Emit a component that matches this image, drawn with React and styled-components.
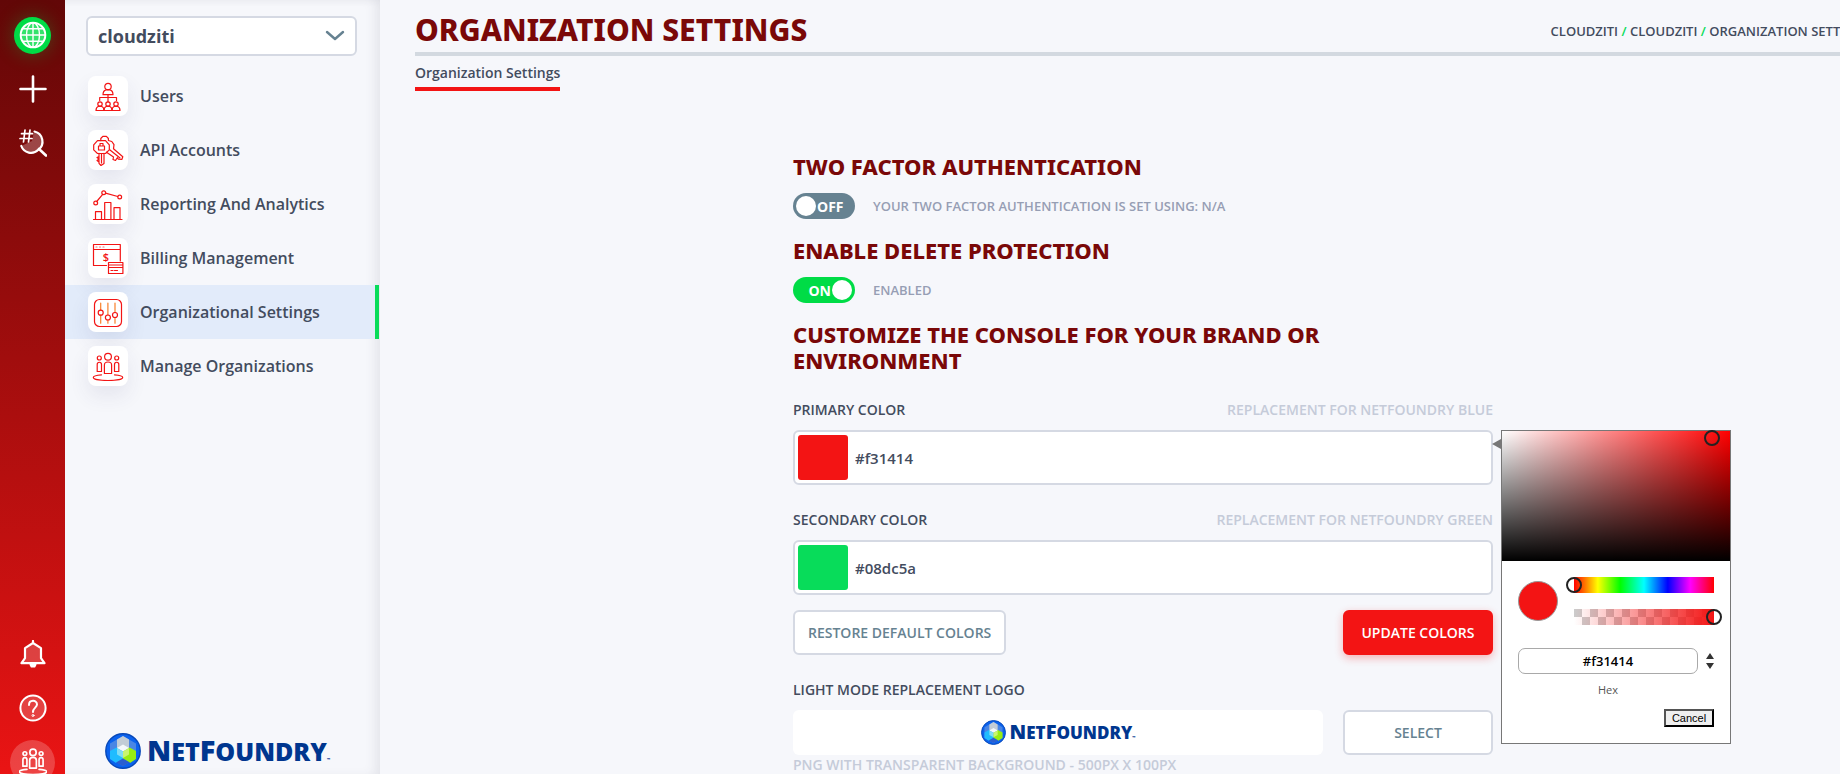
import React, { useState } from "react";
import styled, { createGlobalStyle } from "styled-components";

const GlobalStyle = createGlobalStyle`
  * {
    box-sizing: border-box;
  }
  body {
    margin: 0;
    background-color: #f6f7fb;
    color: #434c5e;
    font-family: "Open Sans", "Noto Sans", sans-serif;
    font-size: 14px;
    font-weight: 600;
  }
  button, input, select {
    font: inherit;
    color: inherit;
  }
  h1, h2, ul {
    margin: 0;
    padding: 0;
  }
  a {
    color: inherit;
    text-decoration: none;
  }
`;

const Shell = styled.div`
  display: flex;
  height: 100vh;
  overflow: hidden;
`;

const Rail = styled.nav`
  flex: none;
  display: flex;
  flex-direction: column;
  justify-content: space-between;
  width: 65px;
  padding-top: 8px;
  background-image: linear-gradient(180deg, #620707, #ea1414);
`;

const RailGroup = styled.div`
  display: flex;
  flex-direction: column;
  align-items: center;
  margin-bottom: ${props => (props.$bottom ? "-15px" : "0")};
`;

const RailButton = styled.button`
  display: flex;
  align-items: center;
  justify-content: center;
  width: 100%;
  height: 54px;
  padding: 0;
  border: 0;
  background: none;
  color: #fff;
  cursor: pointer;
`;

const RailBadge = styled.span`
  display: flex;
  align-items: center;
  justify-content: center;
  width: ${props => props.$size}px;
  height: ${props => props.$size}px;
  border-radius: 50%;
  background-color: ${props => props.$color};
  box-shadow: ${props => (props.$glow ? "0 0 20px rgba(0, 220, 70, 0.3)" : "none")};
`;

const Sidebar = styled.aside`
  flex: none;
  display: flex;
  flex-direction: column;
  width: 315px;
  padding: 16px 1px 5px 0;
  box-shadow: inset -8px 0 12px -4px rgba(60, 60, 80, 0.1), inset 0 6px 8px -6px rgba(60, 60, 80, 0.06);
`;

const NetworkPicker = styled.label`
  display: grid;
  align-items: center;
  margin: 0 22px 13px 21px;
  > * {
    grid-area: 1 / 1;
  }
  > svg {
    justify-self: end;
    margin-right: 12px;
    pointer-events: none;
  }
`;

const NetworkSelect = styled.select`
  width: 100%;
  height: 40px;
  padding: 0 10px;
  border: 2px solid #d5d9e3;
  border-radius: 6px;
  background-color: #fff;
  appearance: none;
  font-size: 18px;
  font-weight: 700;
`;

const NavList = styled.ul`
  list-style: none;
`;

const NavLink = styled.a`
  display: flex;
  align-items: center;
  gap: 12px;
  height: 54px;
  padding-left: 23px;
  border-right: 4px solid ${props => (props.$active ? "#08dc5a" : "transparent")};
  background-color: ${props => (props.$active ? "#e2ebfa" : "transparent")};
  font-size: 16px;
`;

const NavTile = styled.span`
  display: block;
  width: 40px;
  height: 40px;
  border-radius: 8px;
  background-color: #fff;
  box-shadow: 0 10px 20px rgba(60, 60, 110, 0.09);
`;

const SidebarLogo = styled.div`
  margin: auto 0 0 40px;
`;

const Brand = styled.div`
  display: flex;
  align-items: center;
  gap: ${props => (props.$small ? 4 : 6)}px;
  color: #00368f;
  font-size: ${props => (props.$small ? 17 : 25)}px;
  font-weight: 800;
  line-height: 1;
  > svg {
    flex: none;
    width: ${props => (props.$small ? 25 : 36)}px;
    height: ${props => (props.$small ? 25 : 36)}px;
  }
  > span {
    padding-bottom: ${props => (props.$small ? 1 : 3)}px;
  }
`;

const BrandCap = styled.span`
  font-size: ${props => (props.$small ? 20 : 29)}px;
`;

const BrandMark = styled.span`
  font-size: 4px;
`;

const Main = styled.main`
  flex: 1;
  min-width: 0;
  margin-right: -31px;
  padding: 0 0 0 35px;
`;

const PageHeader = styled.header`
  display: flex;
  align-items: center;
  justify-content: space-between;
  height: 56px;
  padding-top: 8px;
  border-bottom: 4px solid #d3d9e0;
`;

const PageTitle = styled.h1`
  color: #7a0808;
  font-family: "Noto Sans", "Open Sans", sans-serif;
  font-size: 30px;
  font-weight: 800;
  line-height: 44px;
  text-transform: uppercase;
  white-space: nowrap;
`;

const Breadcrumbs = styled.nav`
  padding-top: 2px;
  font-size: 13px;
  text-transform: uppercase;
  white-space: nowrap;
`;

const Slash = styled.span`
  color: #08dc5a;
`;

const Tabs = styled.nav`
  display: flex;
  height: 97px;
`;

const Tab = styled.a`
  height: 35px;
  padding-top: 7px;
  border-bottom: 4px solid #f31414;
  line-height: 20px;
`;

const Content = styled.div`
  width: 700px;
  margin: 0 auto;
`;

const SectionTitle = styled.h2`
  margin-bottom: 14px;
  color: #7a0808;
  font-family: "Noto Sans", "Open Sans", sans-serif;
  font-size: 22px;
  font-weight: 800;
  line-height: 26px;
  text-transform: uppercase;
`;

const ToggleRow = styled.div`
  display: flex;
  align-items: center;
  gap: 18px;
  margin-bottom: 18px;
  color: #969eb4;
  font-size: 13px;
  text-transform: uppercase;
`;

const ToggleTrack = styled.label`
  display: flex;
  flex-direction: ${props => (props.$on ? "row-reverse" : "row")};
  align-items: center;
  gap: 1px;
  width: 62px;
  height: 26px;
  padding: 0 3px;
  border-radius: 13px;
  background-color: ${props => (props.$on ? "#00dc46" : "#668291")};
  color: #fff;
  font-size: 14px;
  font-weight: 700;
  cursor: pointer;
`;

const ToggleInput = styled.input`
  width: 20px;
  height: 20px;
  margin: 0;
  border-radius: 50%;
  background-color: #fff;
  appearance: none;
  cursor: pointer;
`;

const BrandForm = styled.form`
  padding-top: 3px;
`;

const Field = styled.div`
  position: relative;
  margin-bottom: 15px;
`;

const FieldHeader = styled.div`
  display: flex;
  justify-content: space-between;
  padding: 10px 0;
  line-height: 20px;
  text-transform: uppercase;
`;

const Hint = styled.span`
  color: #c5cbd9;
  line-height: 20px;
  text-transform: uppercase;
`;

const ColorBox = styled.div`
  display: flex;
  align-items: center;
  gap: 7px;
  height: 55px;
  padding: 3px;
  border: 2px solid #d5d9e3;
  border-radius: 6px;
  background-color: #fff;
`;

const Swatch = styled.button`
  width: 50px;
  height: 45px;
  padding: 0;
  border: 0;
  border-radius: 3px;
  background-color: ${props => props.$color};
`;

const ColorInput = styled.input`
  flex: 1;
  min-width: 0;
  padding: 0;
  border: 0;
  outline: 0;
  background: none;
  font-size: 15px;
`;

const ButtonRow = styled.div`
  display: flex;
  justify-content: space-between;
  margin-bottom: 15px;
`;

const Button = styled.button`
  min-width: 150px;
  height: 45px;
  padding: 0 13px;
  border: 2px solid ${props => (props.$primary ? "#f31414" : "#d5d9e3")};
  border-radius: 6px;
  background-color: ${props => (props.$primary ? "#f31414" : "#fff")};
  box-shadow: ${props => (props.$primary ? "0 3px 8px rgba(243, 20, 20, 0.3)" : "none")};
  color: ${props => (props.$primary ? "#fff" : "#668291")};
  text-transform: uppercase;
  cursor: pointer;
`;

const LogoRow = styled.div`
  display: flex;
  gap: 20px;
`;

const LogoPreview = styled.div`
  flex: 1;
  display: flex;
  align-items: center;
  justify-content: center;
  border-radius: 6px;
  background-color: #fff;
`;

/* Colour picker popover, opens to the right of its field */
const Popover = styled.div`
  position: absolute;
  top: 40px;
  left: calc(100% + 8px);
  width: 230px;
  border: 1px solid #777;
  background-color: #fff;
  &::before {
    content: "";
    position: absolute;
    top: 8px;
    left: -10px;
    border: 5px solid transparent;
    border-left: 0;
    border-right: 9px solid #777;
  }
`;

const Saturation = styled.div`
  position: relative;
  height: 130px;
  background-color: #f00;
  background-image: linear-gradient(to top, #000, transparent), linear-gradient(to right, #fff, transparent);
`;

const SaturationCursor = styled.span`
  position: absolute;
  width: 16px;
  height: 16px;
  margin: -8px;
  border: 2px solid #222;
  border-radius: 50%;
`;

const PickerBody = styled.div`
  padding: 16px;
`;

const PickerRow = styled.div`
  display: flex;
  align-items: center;
  gap: ${props => props.$gap}px;
  margin-bottom: ${props => props.$space}px;
`;

const Preview = styled.span`
  width: 40px;
  height: 40px;
  border: 1px solid #999;
  border-radius: 50%;
  background-color: ${props => props.$color};
`;

const Sliders = styled.div`
  flex: 1;
  display: grid;
  gap: 16px;
`;

const Track = styled.div`
  height: 16px;
  background: ${props =>
    props.$alpha
      ? "linear-gradient(to right, rgba(243, 20, 20, 0), #f31414), conic-gradient(#fff 25%, #ccc 0 50%, #fff 0 75%, #ccc 0) 0 0 / 16px 16px"
      : "linear-gradient(to right, #f00, #ff0 17%, #0f0 33%, #0ff 50%, #00f 67%, #f0f 83%, #f00)"};
`;

const Range = styled.input`
  display: block;
  width: calc(100% + 16px);
  height: 16px;
  margin: 0 -8px;
  background: none;
  appearance: none;
  &::-webkit-slider-thumb {
    width: 16px;
    height: 16px;
    border: 2px solid #222;
    border-radius: 50%;
    appearance: none;
  }
`;

const HexInput = styled.input`
  width: 180px;
  height: 26px;
  padding: 0;
  border: 1px solid #a9a9a9;
  border-radius: 7px;
  background-color: #fff;
  color: #000;
  font-size: 13px;
  text-align: center;
`;

const FormatButton = styled.button`
  display: flex;
  padding: 0;
  border: 0;
  background: none;
`;

const HexLabel = styled.label`
  display: block;
  width: 180px;
  margin-bottom: 11px;
  color: #555;
  font-size: 11px;
  font-weight: 400;
  line-height: 16px;
  text-align: center;
`;

const CancelButton = styled.button`
  display: block;
  width: 50px;
  height: 18px;
  margin-left: auto;
  padding: 0;
  border: 2px outset #000;
  background-color: #efefef;
  color: #000;
  font-family: "Liberation Sans", sans-serif;
  font-size: 11px;
  font-weight: 400;
  line-height: 14px;
`;

const iconProps = {
  fill: "none",
  stroke: "currentColor",
  strokeLinecap: "round",
  strokeLinejoin: "round",
  "aria-hidden": true
};

const TileIcon = ({ children }) => (
  <svg {...iconProps} width="40" height="40" viewBox="0 0 40 40" color="#f31414" strokeWidth="1.2">
    {children}
  </svg>
);

const RailIcon = ({ children }) => (
  <svg {...iconProps} width="28" height="28" viewBox="0 0 28 28" strokeWidth="2">
    {children}
  </svg>
);

const UsersIcon = () => (
  <TileIcon>
    <circle cx="20" cy="10.5" r="3.2" />
    <path d="M15 18.7c0-2.5 1.2-4.3 3-4.8h4c1.8.5 3 2.3 3 4.8zM20 18.7V26M11.7 24.5v-3h16.8v3" />
    {[12, 20, 28].map(x => (
      <g key={x}>
        <circle cx={x} cy="28" r="2.2" />
        <path d={`M${x - 4} 34.5c0-2 1-3.7 2.6-4.2h2.8c1.6.5 2.6 2.2 2.6 4.2z`} />
      </g>
    ))}
  </TileIcon>
);

const KeysIcon = () => (
  <TileIcon>
    <path d="M11 23.3v10l2 2.2 3-2v-10.2M11 26.5l-2 1 2 1.5-2 1.5 2 1.5M13.5 24v9" />
    <path d="M13.5 23.5h4l3.8-3.6v-5l-3.8-4.2h-8l-3.8 4.2v5l3.8 3.6zM10.5 16h6v4h-6zM12 16v-2.500h3V16" />
    <path d="M12.8 10.6V8.5l2-2.2h3.6l2 2.2v2l3.4 1 2.2 3.2-.5 4 9.3 8-1 2.8-3.5-.3-1-1.5-1.8 2.8-2.5-1 .5-2.5-7-4.800" />
    <path d="M22 20l10 8" />
  </TileIcon>
);

const AnalyticsIcon = () => (
  <TileIcon>
    <path d="M5.5 35.5H34M7.5 35v-7.3h6V35M16.7 35V18.5h6.2V35M26 35V23.7h6V35M8.7 17.5l6-7.2M17.5 9.200l12.300 3.300" />
    <circle cx="7.7" cy="19" r="1.9" />
    <circle cx="15.7" cy="8.7" r="1.9" />
    <circle cx="31.7" cy="13" r="1.9" />
  </TileIcon>
);

const BillingIcon = () => (
  <TileIcon>
    <path d="M18.5 27.5h-13v-21h26.8V23M5.5 11.5h26.800" />
    <path d="M8 9h1M11.500 9h1M15 9h1" opacity="0.6" />
    <path d="M20.5 24.5h14.4v11H20.5zM20.5 27h14.400M20.5 29.5h14.400M23 32.5h2M26.5 32.5h3" />
    <text x="18" y="23.3" fill="currentColor" stroke="none" fontSize="11" textAnchor="middle">
      $
    </text>
  </TileIcon>
);

const SettingsIcon = () => (
  <TileIcon>
    <rect x="6.5" y="7.5" width="27" height="27" rx="5" />
    <path stroke="#f8802a" d="M12.7 11v7.2M12.7 23.2v8M19.9 11v12M19.9 28v3.200M27 11v9.500M27 25.500v5.700" />
    <circle cx="12.7" cy="20.7" r="2.5" />
    <circle cx="19.9" cy="25.5" r="2.5" />
    <circle cx="27" cy="23" r="2.5" />
  </TileIcon>
);

const OrganizationShapes = () => (
  <>
    <circle cx="20" cy="10.7" r="3.4" />
    <circle cx="11.3" cy="12" r="2" />
    <circle cx="28.7" cy="12" r="2" />
    <path d="M16.4 27.5V19c0-2 1.3-3 3.6-3s3.6 1 3.6 3v8.5zM9.2 25.5v-7c0-3 4.3-3 4.3 0v7zM26.5 25.5v-7c0-3 4.300-3 4.300 0v7z" />
    <path d="M13.5 28.9c-5 .4-8.200 1.300-8.200 2.600 0 1.700 6.500 3 14.700 3s14.700-1.300 14.700-3c0-1.300-3.200-2.200-8.200-2.600" />
  </>
);

const GlobeIcon = () => (
  <RailIcon>
    <circle cx="14" cy="14" r="12.3" fill="rgba(255,255,255,0.2)" />
    <path d="M14 1.7v24.6M1.7 14h24.6M4 7.7h20M4 20.3h20" strokeWidth="1.4" />
    <ellipse cx="14" cy="14" rx="6.5" ry="12.3" strokeWidth="1.4" />
  </RailIcon>
);

const SearchIcon = () => (
  <RailIcon>
    <path d="M15 2.5a10.300 10.300 0 0 1 4.300 18.300A10.300 10.300 0 0 1 2.300 17L13 12z" fill="rgba(255,255,255,0.25)" stroke="none" />
    <path d="M2.5 4.7h11M1 9.500h12M6 1L4.500 13M11 1L9.500 13" strokeWidth="1.7" />
    <path d="M15.5 2.5a10.300 10.300 0 0 1 3.800 18.300A10.300 10.300 0 0 1 2.300 17" strokeWidth="2.2" />
    <path d="M20 20l7 6.5" strokeWidth="2.6" />
  </RailIcon>
);

const BellIcon = () => (
  <RailIcon>
    <path d="M14 1v2M14 3L6 8.2v10l-3.500 5h23l-3.500-5v-10z" fill="rgba(255,255,255,0.2)" strokeWidth="2.2" />
    <path d="M11.5 24.5h5l-1 2h-3z" fill="currentColor" />
  </RailIcon>
);

const HelpIcon = () => (
  <RailIcon>
    <circle cx="14" cy="14" r="12.6" fill="rgba(255,255,255,0.2)" />
    <path d="M10 11c0-5.5 8-5.5 8-.5 0 3-4 3.5-4 7.5" />
    <circle cx="14" cy="21.5" r="1" strokeWidth="1" />
  </RailIcon>
);

const BrandLogo = ({ small = false }) => (
  <Brand $small={small}>
    <svg viewBox="0 0 36 36" aria-hidden="true">
      <circle cx="18" cy="18" r="17.2" fill="#0b62ee" stroke="#0848b8" strokeWidth="1.4" />
      <path d="M18 3l13 7.5v15L18 33 5 25.5v-15z" fill="#4a86e4" />
      <path d="M18 3l6 3.5V15H12V6.5z" fill="#c2ccd6" />
      <path d="M11.5 14.5l6.5 4v7L11 30l-6-4v-8z" fill="#1fbcff" />
      <path d="M24.5 14.5l-6.5 4v7l7 4.5 6-4v-8z" fill="#98ee12" />
      <path d="M18 25.5l7 4-7 3.5-7-3.5z" fill="#2a5fd0" />
      <path d="M18 11.5l6 3.5-6 3.5-6-3.5z" fill="#f4f8fb" />
      <path d="M12 15l6 3.5V25l-6-3.5z" fill="#7edcf5" />
      <path d="M24 15l-6 3.5V25l6-3.5z" fill="#c9f56f" />
    </svg>
    <span>
      <BrandCap $small={small}>N</BrandCap>ET<BrandCap $small={small}>F</BrandCap>OUNDRY
      <BrandMark>™</BrandMark>
    </span>
  </Brand>
);

const navItems = [
  { label: "Users", icon: <UsersIcon /> },
  { label: "API Accounts", icon: <KeysIcon /> },
  { label: "Reporting And Analytics", icon: <AnalyticsIcon /> },
  { label: "Billing Management", icon: <BillingIcon /> },
  { label: "Organizational Settings", icon: <SettingsIcon />, active: true },
  { label: "Manage Organizations", icon: <TileIcon><OrganizationShapes /></TileIcon> }
];

const Toggle = ({ label, defaultOn = false, children }) => {
  const [on, setOn] = useState(defaultOn);
  return (
    <ToggleRow>
      <ToggleTrack $on={on}>
        <ToggleInput
          type="checkbox"
          aria-label={label}
          checked={on}
          onChange={e => setOn(e.target.checked)}
        />
        {on ? "ON" : "OFF"}
      </ToggleTrack>
      {children}
    </ToggleRow>
  );
};

const ColorPicker = ({ color, onClose }) => (
  <Popover>
    <Saturation>
      <SaturationCursor style={{ left: "92%", top: "5%" }} />
    </Saturation>
    <PickerBody>
      <PickerRow $gap={16} $space={23}>
        <Preview $color={color} />
        <Sliders>
          <Track>
            <Range type="range" aria-label="Hue" min="0" max="360" defaultValue="0" />
          </Track>
          <Track $alpha>
            <Range type="range" aria-label="Alpha" min="0" max="100" defaultValue="100" />
          </Track>
        </Sliders>
      </PickerRow>
      <PickerRow $gap={8} $space={8}>
        <HexInput id="hex" defaultValue={color} />
        <FormatButton type="button" aria-label="Change format">
          <svg width="8" height="16" viewBox="0 0 8 16" fill="#333" aria-hidden="true">
            <path d="M4 0l4 6H0zM4 16l4-6H0z" />
          </svg>
        </FormatButton>
      </PickerRow>
      <HexLabel htmlFor="hex">Hex</HexLabel>
      <CancelButton type="button" onClick={onClose}>Cancel</CancelButton>
    </PickerBody>
  </Popover>
);

const ColorField = ({ id, label, hint, color, defaultOpen = false }) => {
  const [open, setOpen] = useState(defaultOpen);
  return (
    <Field>
      <FieldHeader>
        <label htmlFor={id}>{label}</label>
        <Hint>{hint}</Hint>
      </FieldHeader>
      <ColorBox>
        <Swatch type="button" aria-label={`Pick ${label}`} $color={color} onClick={() => setOpen(!open)} />
        <ColorInput id={id} defaultValue={color} />
      </ColorBox>
      {open && <ColorPicker color={color} onClose={() => setOpen(false)} />}
    </Field>
  );
};

const App = () => (
  <>
    <GlobalStyle />
    <Shell>
      <Rail>
        <RailGroup>
          <RailButton aria-label="Networks">
            <RailBadge $size={37} $color="#00dc46" $glow>
              <GlobeIcon />
            </RailBadge>
          </RailButton>
          <RailButton aria-label="Create">
            <RailIcon>
              <path d="M14 1.5v25M1.5 14h25" strokeWidth="2.6" />
            </RailIcon>
          </RailButton>
          <RailButton aria-label="Search">
            <SearchIcon />
          </RailButton>
        </RailGroup>
        <RailGroup $bottom>
          <RailButton aria-label="Notifications">
            <BellIcon />
          </RailButton>
          <RailButton aria-label="Help">
            <HelpIcon />
          </RailButton>
          <RailButton aria-label="Organization">
            <RailBadge $size={45} $color="rgba(255, 255, 255, 0.2)">
              <svg {...iconProps} width="28" height="28" viewBox="5 6 30 30" strokeWidth="1.8">
                <OrganizationShapes />
              </svg>
            </RailBadge>
          </RailButton>
        </RailGroup>
      </Rail>

      <Sidebar>
        <NetworkPicker>
          <NetworkSelect aria-label="Organization">
            <option>cloudziti</option>
          </NetworkSelect>
          <svg {...iconProps} width="20" height="12" viewBox="0 0 20 12" color="#668291" strokeWidth="2.4">
            <path d="M2 2l8 7 8-7" />
          </svg>
        </NetworkPicker>
        <NavList>
          {navItems.map(item => (
            <li key={item.label}>
              <NavLink href="#" $active={item.active}>
                <NavTile>{item.icon}</NavTile>
                {item.label}
              </NavLink>
            </li>
          ))}
        </NavList>
        <SidebarLogo>
          <BrandLogo />
        </SidebarLogo>
      </Sidebar>

      <Main>
        <PageHeader>
          <PageTitle>Organization Settings</PageTitle>
          <Breadcrumbs>
            <a href="#">cloudziti</a> <Slash>/</Slash> <a href="#">cloudziti</a> <Slash>/</Slash>{" "}
            <a href="#">Organization Settings</a>
          </Breadcrumbs>
        </PageHeader>
        <Tabs>
          <Tab href="#">Organization Settings</Tab>
        </Tabs>

        <Content>
          <SectionTitle>Two Factor Authentication</SectionTitle>
          <Toggle label="Two factor authentication">
            Your two factor authentication is set using: N/A
          </Toggle>
          <SectionTitle>Enable Delete Protection</SectionTitle>
          <Toggle label="Delete protection" defaultOn>
            Enabled
          </Toggle>
          <SectionTitle>Customize the console for your brand or environment</SectionTitle>
          <BrandForm>
            <ColorField
              id="primary"
              label="Primary Color"
              hint="Replacement for NetFoundry Blue"
              color="#f31414"
              defaultOpen
            />
            <ColorField
              id="secondary"
              label="Secondary Color"
              hint="Replacement for NetFoundry Green"
              color="#08dc5a"
            />
            <ButtonRow>
              <Button type="button">Restore Default Colors</Button>
              <Button type="button" $primary>Update Colors</Button>
            </ButtonRow>
            <FieldHeader>Light Mode Replacement Logo</FieldHeader>
            <LogoRow>
              <LogoPreview>
                <BrandLogo small />
              </LogoPreview>
              <Button type="button">Select</Button>
            </LogoRow>
            <Hint>PNG with transparent background - 500px x 100px</Hint>
          </BrandForm>
        </Content>
      </Main>
    </Shell>
  </>
);

export default App;
